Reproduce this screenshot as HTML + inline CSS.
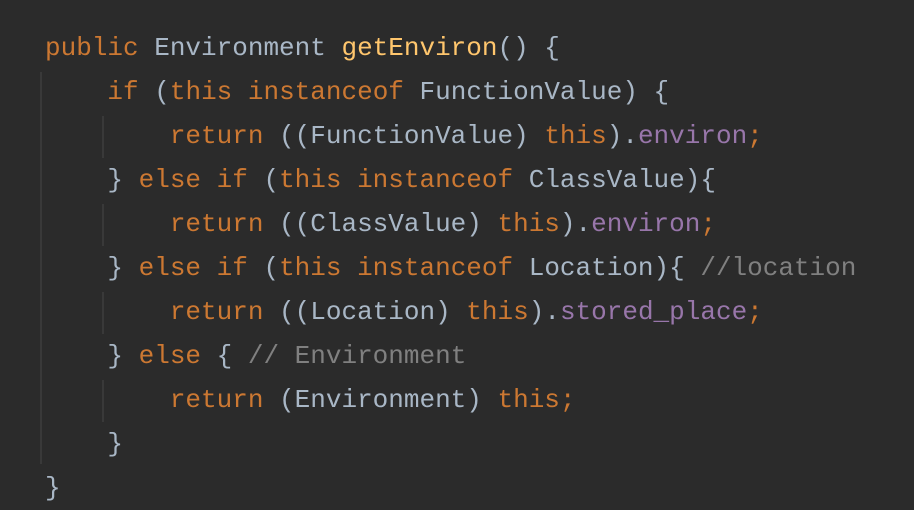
<html><head><style>
body{margin:0;width:914px;height:510px;background:#2b2b2b;overflow:hidden;position:relative}
pre{margin:0;position:absolute;left:45px;top:26px;font:26px/44px "Liberation Mono",monospace;color:#a9b7c6}
.k{color:#cc7832}.m{color:#ffc66d}.f{color:#9876aa}.c{color:#808080}
.g{position:absolute;width:2px;background:#393939}
</style></head><body>
<div class="g" style="left:40px;top:72px;height:392px"></div>
<div class="g" style="left:102px;top:116px;height:42px"></div>
<div class="g" style="left:102px;top:204px;height:42px"></div>
<div class="g" style="left:102px;top:292px;height:42px"></div>
<div class="g" style="left:102px;top:380px;height:42px"></div>
<pre><span class="k">public</span> Environment <span class="m">getEnviron</span>() {
    <span class="k">if</span> (<span class="k">this instanceof</span> FunctionValue) {
        <span class="k">return</span> ((FunctionValue) <span class="k">this</span>).<span class="f">environ</span><span class="k">;</span>
    } <span class="k">else if</span> (<span class="k">this instanceof</span> ClassValue){
        <span class="k">return</span> ((ClassValue) <span class="k">this</span>).<span class="f">environ</span><span class="k">;</span>
    } <span class="k">else if</span> (<span class="k">this instanceof</span> Location){ <span class="c">//location</span>
        <span class="k">return</span> ((Location) <span class="k">this</span>).<span class="f">stored_place</span><span class="k">;</span>
    } <span class="k">else</span> { <span class="c">// Environment</span>
        <span class="k">return</span> (Environment) <span class="k">this;</span>
    }
}</pre>
</body></html>
